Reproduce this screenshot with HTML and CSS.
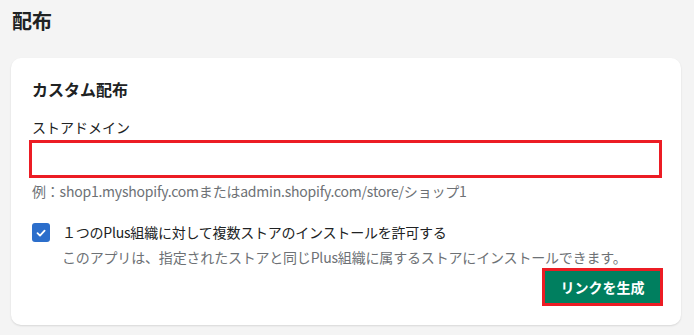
FILE: index.html
```html
<!DOCTYPE html>
<html lang="ja">
<head>
    <meta charset="UTF-8">
    <title>配布</title>
    <link rel="stylesheet" href="styles.css">
</head>
<body>
    <div class="page">
        <h1 class="page-title">配布</h1>

        <div class="card">
            <h2 class="card-title">カスタム配布</h2>

            <label class="field-label" for="storeDomain">ストアドメイン</label>
            <input class="text-input highlight" id="storeDomain" type="text">
            <div class="help-text">例：shop1.myshopify.comまたはadmin.shopify.com/store/ショップ1</div>

            <div class="check-row">
                <span class="checkbox">
                    <svg width="12" height="12" viewBox="0 0 12 12"><path d="M2.5 6.2 L5 8.6 L9.6 3.6" fill="none" stroke="#fff" stroke-width="1.8" stroke-linecap="round" stroke-linejoin="round"/></svg>
                </span>
                <div>
                    <div class="check-label">１つのPlus組織に対して複数ストアのインストールを許可する</div>
                    <div class="check-help">このアプリは、指定されたストアと同じPlus組織に属するストアにインストールできます。</div>
                </div>
            </div>

            <div class="actions">
                <button class="primary-btn highlight">リンクを生成</button>
            </div>
        </div>
    </div>
</body>
</html>
```

FILE: styles.css
```css
body {
    margin: 0;
    background-color: #f4f4f4;
    color: #202223;
    font-family: "Noto Sans CJK JP", "Noto Sans", sans-serif;
    font-size: 14px;
}
.page {
    padding: 7px 13px 10px 11px;
}
.page-title {
    margin: 0 0 0 1px;
    font-size: 20px;
    line-height: 28px;
    font-weight: 700;
}
.card {
    margin-top: 23px;
    background-color: #fff;
    border-radius: 10px;
    box-shadow: 0 1px 2px rgba(0, 0, 0, 0.12);
    padding: 19px 22px 22px 21px;
}
.card-title {
    margin: 0;
    font-size: 16px;
    line-height: 24px;
    font-weight: 700;
}
.field-label {
    display: block;
    margin-top: 16px;
    line-height: 20px;
}
.text-input {
    display: block;
    box-sizing: border-box;
    width: 100%;
    height: 32px;
    margin-top: 6px;
    border: none;
    background: #fff;
    font: inherit;
}
.highlight {
    outline: 3px solid #ec1c24;
    outline-offset: 0;
}
.help-text {
    margin-top: 6px;
    line-height: 20px;
    color: #6d7175;
    letter-spacing: -0.22px;
}
.check-row {
    display: flex;
    gap: 12px;
    margin-top: 21px;
}
.checkbox {
    display: flex;
    align-items: center;
    justify-content: center;
    width: 18px;
    height: 19px;
    margin-top: 1px;
    border-radius: 3px;
    background-color: #2c6ecb;
}
.check-label {
    line-height: 20px;
    letter-spacing: -0.22px;
}
.check-help {
    margin-top: 5px;
    line-height: 20px;
    color: #6d7175;
    letter-spacing: -0.17px;
}
.actions {
    display: flex;
    justify-content: flex-end;
    margin-top: 4px;
}
.primary-btn {
    width: 115px;
    height: 32px;
    margin-right: -1px;
    border: none;
    background-color: #007f5f;
    color: #fff;
    font: inherit;
    font-weight: 700;
}
```
